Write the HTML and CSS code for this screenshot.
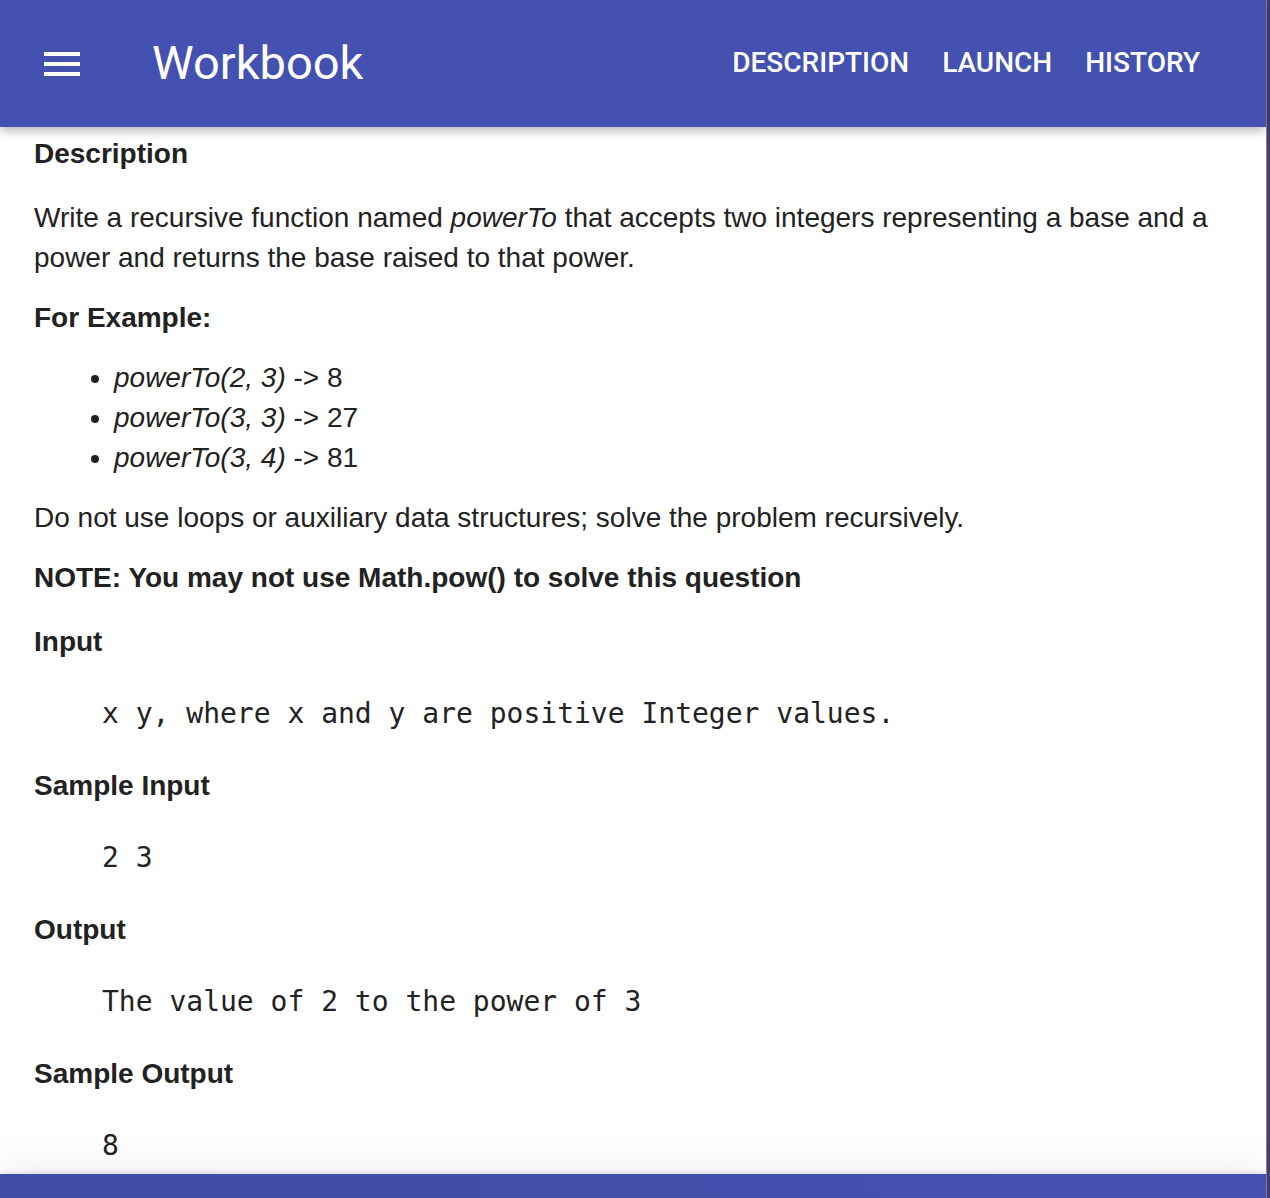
FILE: index.html
```html
<!DOCTYPE html>
<html lang="en">
<head>
<meta charset="utf-8">
<title>Workbook</title>
<link rel="stylesheet" href="styles.css">
</head>
<body>
<div class="frame">
  <div class="app">
    <header class="topbar">
      <button class="menu-btn" aria-label="Menu">
        <svg viewBox="0 0 24 24" width="48" height="48"><path fill="#fff" d="M3 18h18v-2H3v2zm0-5h18v-2H3v2zm0-7v2h18V6H3z"/></svg>
      </button>
      <div class="title">Workbook</div>
      <nav class="nav">
        <a class="nav-link">DESCRIPTION</a>
        <a class="nav-link">LAUNCH</a>
        <a class="nav-link">HISTORY</a>
      </nav>
    </header>
    <main class="content">
      <h4 class="heading">Description</h4>
      <p class="para">Write a recursive function named <em>powerTo</em> that accepts two integers representing a base and a power and returns the base raised to that power.</p>
      <p class="para strong">For Example:</p>
      <ul class="examples">
        <li><em>powerTo(2, 3)</em> -&gt; 8</li>
        <li><em>powerTo(3, 3)</em> -&gt; 27</li>
        <li><em>powerTo(3, 4)</em> -&gt; 81</li>
      </ul>
      <p class="para">Do not use loops or auxiliary data structures; solve the problem recursively.</p>
      <p class="para strong">NOTE: You may not use Math.pow() to solve this question</p>
      <h4 class="heading">Input</h4>
      <pre class="code">x y, where x and y are positive Integer values.</pre>
      <h4 class="heading">Sample Input</h4>
      <pre class="code">2 3</pre>
      <h4 class="heading">Output</h4>
      <pre class="code">The value of 2 to the power of 3</pre>
      <h4 class="heading">Sample Output</h4>
      <pre class="code">8</pre>
    </main>
    <footer class="bottombar"></footer>
  </div>
  <div class="edge"></div>
</div>
</body>
</html>
```
FILE: styles.css
```css
html, body {
  margin: 0;
  padding: 0;
  height: 100%;
  overflow: hidden;
  background: #fff;
}

.frame {
  display: flex;
  height: 1198px;
}

.app {
  flex: 1;
  display: flex;
  flex-direction: column;
  min-width: 0;
  border-right: 1px solid #8a8a8a;
  position: relative;
}

.edge {
  width: 3px;
  background: #4a3b78;
}

.topbar {
  height: 127px;
  flex: none;
  background: #4451b0;
  display: flex;
  align-items: center;
  box-shadow: 0 4px 10px rgba(0, 0, 0, 0.28);
  position: relative;
  z-index: 2;
  font-family: Roboto, "Liberation Sans", sans-serif;
  color: #fff;
}

.menu-btn {
  background: none;
  border: 0;
  padding: 0;
  margin-left: 38px;
  width: 48px;
  height: 48px;
  display: flex;
}

.title {
  margin-left: 66px;
  margin-bottom: 3px;
  font-size: 47px;
  font-weight: 400;
}

.nav {
  margin-left: auto;
  margin-right: 66px;
  margin-bottom: 2px;
  display: flex;
  gap: 33px;
}

.nav-link {
  font-size: 28px;
  font-weight: 500;
  color: #fff;
  text-decoration: none;
}

.content {
  flex: 1;
  overflow: hidden;
  padding: 7px 34px 0;
  font-family: "Liberation Sans", Arial, sans-serif;
  font-size: 28px;
  line-height: 40px;
  color: #222;
}

.heading {
  font-size: 28px;
  font-weight: 700;
  margin: 0 0 24px;
  line-height: 40px;
}

.heading + .code {
  margin-top: 32px;
}

.para {
  margin: 20px 0;
}

.para + .heading {
  margin-top: 24px;
}

.strong {
  font-weight: 700;
}

.examples {
  margin: 20px 0;
  padding-left: 80px;
}

.code {
  font-family: "DejaVu Sans Mono", "Liberation Mono", monospace;
  font-size: 28px;
  line-height: 40px;
  margin: 32px 0;
  padding-left: 68px;
  color: #222;
}

.code + .heading {
  margin-top: 32px;
}

.bottombar {
  height: 24px;
  flex: none;
  background: linear-gradient(90deg, #3f4ca5, #4451b0);
  box-shadow: 0 -10px 40px rgba(0, 0, 0, 0.08), 0 -2px 5px rgba(0, 0, 0, 0.1);
  position: relative;
  z-index: 2;
}
```
